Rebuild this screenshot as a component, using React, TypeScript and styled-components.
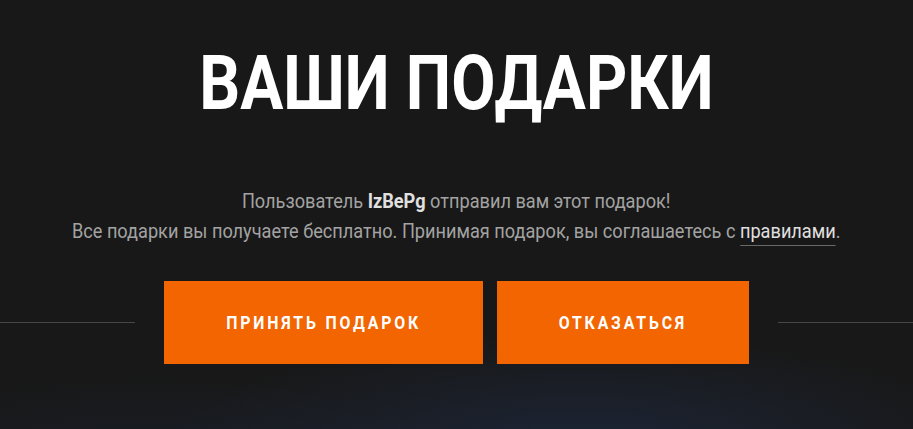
import React from "react";
import styled, { createGlobalStyle } from "styled-components";

const Global = createGlobalStyle`
  html, body { margin: 0; padding: 0; background: #181818; }
  body { font-family: Roboto, "Noto Sans", sans-serif; }
`;

const Page = styled.div`
  position: relative;
  width: 913px;
  height: 429px;
  overflow: hidden;
  background:
    radial-gradient(ellipse 420px 110px at 580px 445px, rgba(30, 42, 66, 0.7), rgba(24, 24, 24, 0) 100%),
    radial-gradient(ellipse 300px 80px at 150px 455px, rgba(26, 34, 50, 0.5), rgba(24, 24, 24, 0) 100%),
    #181818;
  display: flex;
  flex-direction: column;
  align-items: center;
`;

const Title = styled.h1`
  margin: 45px 0 0;
  font-family: Roboto, sans-serif;
  font-weight: 700;
  font-size: 76px;
  line-height: 76px;
  color: #ffffff;
  white-space: nowrap;
  transform: scaleX(0.845);
`;

const Text = styled.div`
  margin-top: 65px;
  font-size: 20px;
  line-height: 30px;
  color: #a3a3a3;
  text-align: center;
  white-space: nowrap;
  transform: scaleX(0.908);
`;

const Name = styled.b`
  color: #e0e0e0;
  font-weight: 700;
`;

const Rules = styled.a`
  color: #e0e0e0;
  text-decoration: none;
  border-bottom: 1px solid #6a6a6a;
  padding-bottom: 2px;
`;

const ActionRow = styled.div`
  margin-top: 35px;
  width: 100%;
  display: flex;
  align-items: center;
  gap: 29px;
`;

const Rule = styled.div`
  flex: 1;
  height: 1px;
  background: #474747;
`;

const Buttons = styled.div`
  display: flex;
  gap: 14px;
`;

const Button = styled.button<{ $w: number }>`
  width: ${(p) => p.$w}px;
  height: 83px;
  border: 0;
  background: #f26500;
  color: #ffffff;
  cursor: pointer;
  padding: 0;
  display: flex;
  align-items: center;
  justify-content: center;
`;

const Label = styled.span`
  display: inline-block;
  font-family: Roboto, sans-serif;
  font-weight: 700;
  font-size: 18px;
  letter-spacing: 3.2px;
  text-transform: uppercase;
  white-space: nowrap;
  transform: scaleX(0.88);
`;

export default function App() {
  return (
    <Page>
      <Global />
      <Title>ВАШИ ПОДАРКИ</Title>
      <Text>
        Пользователь <Name>IzBePg</Name> отправил вам этот подарок!
        <br />
        Все подарки вы получаете бесплатно. Принимая подарок, вы соглашаетесь с{" "}
        <Rules href="#">правилами</Rules>.
      </Text>
      <ActionRow>
        <Rule />
        <Buttons>
          <Button $w={319}>
            <Label>Принять подарок</Label>
          </Button>
          <Button $w={252}>
            <Label>Отказаться</Label>
          </Button>
        </Buttons>
        <Rule />
      </ActionRow>
    </Page>
  );
}
